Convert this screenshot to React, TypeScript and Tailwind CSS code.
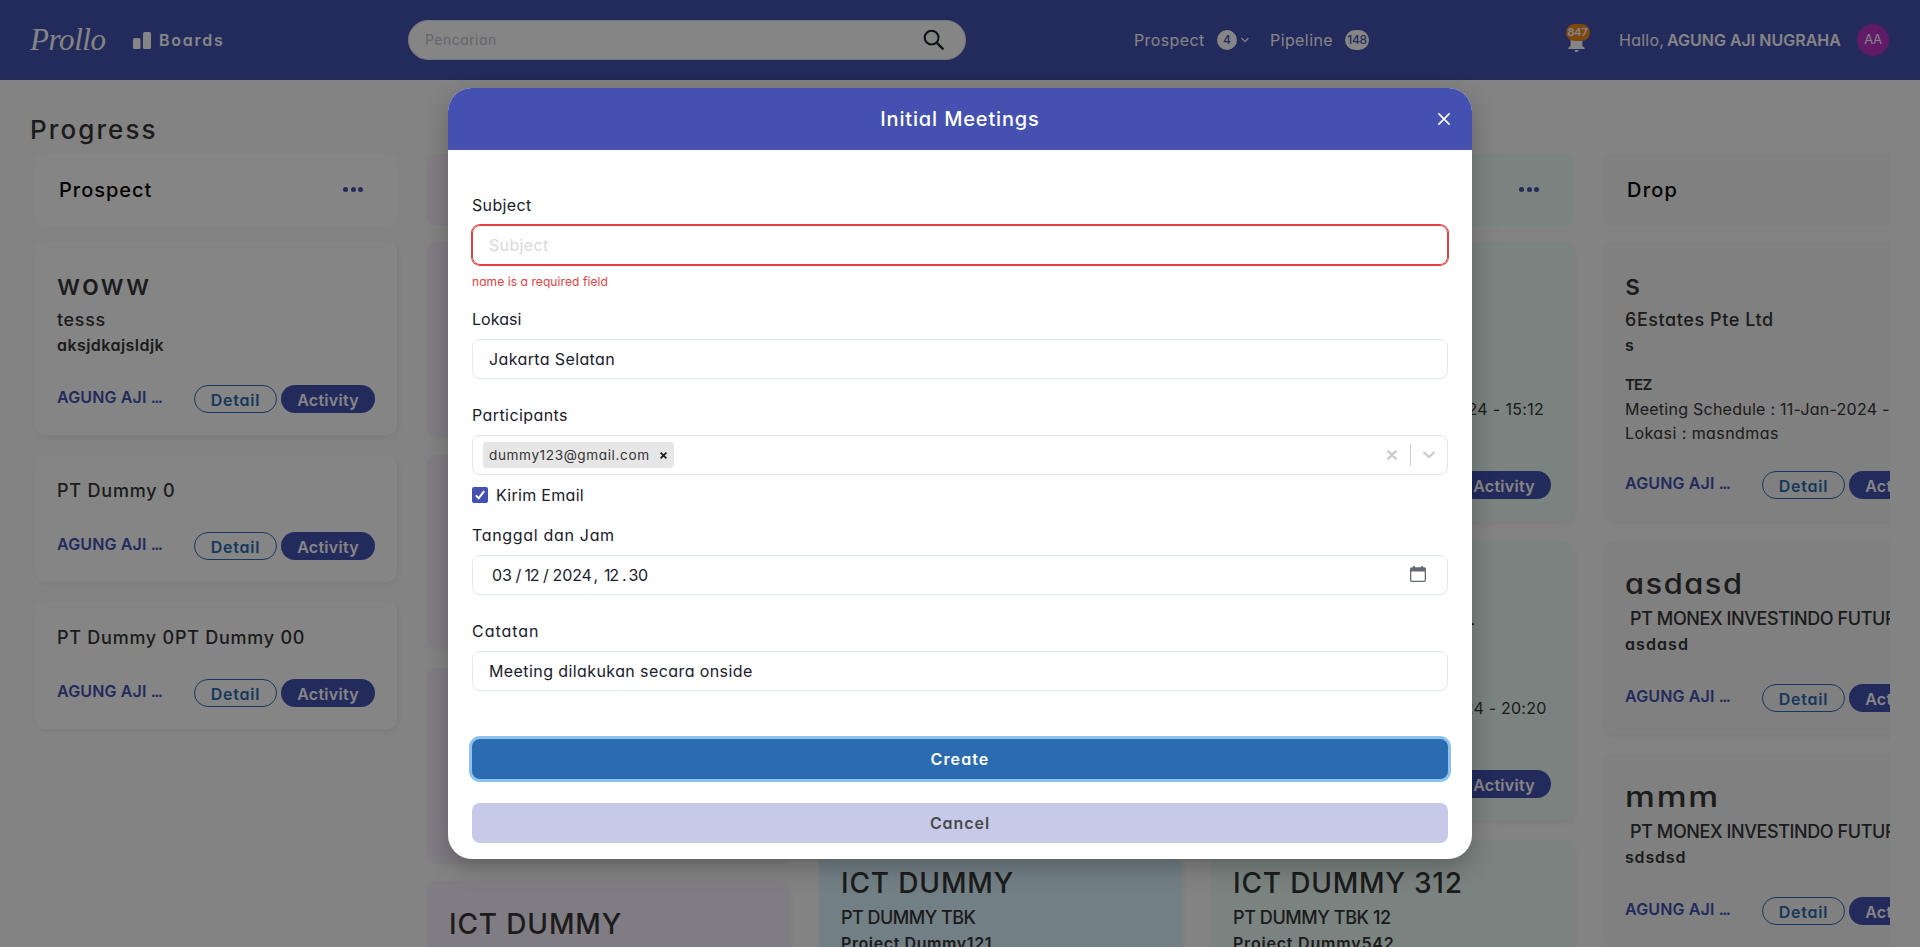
import type { ReactNode } from "react";

type Line = [text: string, tracking: string];

interface CardData {
  blank?: string;
  title?: Line;
  company?: Line;
  project?: Line;
  meeting?: { name: Line; schedule: Line; place: Line };
}

interface ColumnData {
  id: string;
  name: Line;
  headTone: string;
  cardTone: string;
  cards: CardData[];
}

const none: Line = ["", ""];

const columns: ColumnData[] = [
  {
    id: "prospect",
    name: ["Prospect", "tracking-[0.97px]"],
    headTone: "bg-white",
    cardTone: "bg-white",
    cards: [
      {
        title: ["woww", "tracking-[2.2px]"],
        company: ["tesss", "tracking-[0.65px]"],
        project: ["aksjdkajsldjk", "tracking-[0.45px]"],
      },
      { company: ["PT Dummy 0", "tracking-[0.8px]"] },
      { company: ["PT Dummy 0PT Dummy 00", "tracking-[0.75px]"] },
    ],
  },
  {
    id: "meeting",
    name: none,
    headTone: "bg-[#f8f0fc]",
    cardTone: "bg-[#f6eefc]",
    cards: [{ blank: "h-[193px]" }, { blank: "h-[193px]" }, { blank: "h-[193px]" }, { title: ["ICT DUMMY", "tracking-[0.85px]"] }],
  },
  {
    id: "proposal",
    name: none,
    headTone: "bg-[#dcf3ff]",
    cardTone: "bg-[#daf3ff]",
    cards: [
      { blank: "h-[279px]" },
      { blank: "h-[279px]" },
      {
        title: ["ICT DUMMY", "tracking-[0.85px]"],
        company: ["PT DUMMY TBK", "tracking-[-0.52px]"],
        project: ["Project Dummy121", "tracking-[0.6px]"],
      },
    ],
  },
  {
    id: "closing",
    name: none,
    headTone: "bg-[#e8fdf5]",
    cardTone: "bg-[#eafcf5]",
    cards: [
      {
        title: none,
        company: none,
        project: none,
        meeting: { name: none, schedule: ["Meeting Schedule : 11-Jan-2024 - 15:12", "tracking-[0.34px]"], place: none },
      },
      {
        title: none,
        company: ["PT MONEX INVESTINDO TBL", "tracking-[-0.36px]"],
        project: none,
        meeting: { name: none, schedule: ["Meeting Schedule : 11-Jan-2024 - 20:20", "tracking-[0.21px]"], place: none },
      },
      {
        title: ["ICT DUMMY 312", "tracking-[0.81px]"],
        company: ["PT DUMMY TBK 12", "tracking-[-0.42px]"],
        project: ["Project Dummy542", "tracking-[0.8px]"],
      },
    ],
  },
  {
    id: "drop",
    name: ["Drop", "tracking-[1.2px]"],
    headTone: "bg-[#f5f5f5]",
    cardTone: "bg-[#f5f5f5]",
    cards: [
      {
        title: ["s", ""],
        company: ["6Estates Pte Ltd", "tracking-[0.56px]"],
        project: ["s", ""],
        meeting: { name: ["TEZ", "tracking-[-0.8px]"], schedule: ["Meeting Schedule : 11-Jan-2024 - 10:00", "tracking-[0.25px]"], place: ["Lokasi : masndmas", "tracking-[0.43px]"] },
      },
      {
        title: ["asdasd", "tracking-[1.4px] w-fit origin-left scale-x-110"],
        company: ["PT MONEX INVESTINDO FUTURES", "tracking-[-0.41px] pl-[5px]"],
        project: ["asdasd", "tracking-[1.09px]"],
      },
      {
        title: ["mmm", "tracking-[1.5px] w-fit origin-left scale-x-[1.2]"],
        company: ["PT MONEX INVESTINDO FUTURES", "tracking-[-0.41px] pl-[5px]"],
        project: ["sdsdsd", "tracking-[0.83px]"],
      },
    ],
  },
];

const cardBase = "shrink-0 overflow-hidden rounded-[10px] shadow-[2px_3px_5px_rgba(0,0,0,0.05)]";

function Card({ card, tone }: { card: CardData; tone: string }) {
  if (card.blank) return <article className={`${cardBase} ${card.blank} ${tone}`} />;
  return (
    <article className={`${cardBase} p-[22px] whitespace-nowrap text-[#363636] ${tone}`}>
      {card.title && <h3 className={`h-[42px] text-[28px] leading-[42px] font-medium ${card.title[1]}`}>{card.title[0]}</h3>}
      {card.company && <p className={`h-[27px] text-[18px] leading-[27px] font-medium ${card.company[1]}`}>{card.company[0]}</p>}
      {card.project && <p className={`h-6 text-base leading-6 font-semibold ${card.project[1]}`}>{card.project[0]}</p>}
      {card.meeting && (
        <div className="mt-4 -mb-0.5 leading-6">
          <p className={`h-6 text-[15px] leading-6 font-semibold ${card.meeting.name[1]}`}>{card.meeting.name[0]}</p>
          <p className={`h-6 ${card.meeting.schedule[1]}`}>{card.meeting.schedule[0]}</p>
          <p className={`h-6 ${card.meeting.place[1]}`}>{card.meeting.place[0]}</p>
        </div>
      )}
      <div className="mt-7 flex h-7 items-center">
        <span className="mb-1 w-[137px] font-semibold tracking-[0.14px] text-[#4451b1]">
          AGUNG AJI <span className="tracking-[-1.6px]">...</span>
        </span>
        <button className="flex h-7 w-[83px] items-center justify-center rounded-full border border-[#2b6cb0] pt-px font-semibold tracking-[0.8px] text-[#2b6cb0]">Detail</button>
        <button className="ml-1 flex h-7 w-[94px] items-center justify-center rounded-full bg-[#4451b1] pt-px font-semibold tracking-[0.27px] text-white">Activity</button>
      </div>
    </article>
  );
}

function Column({ column }: { column: ColumnData }) {
  return (
    <section className="flex w-[362px] shrink-0 flex-col">
      <header className={`flex h-[72px] shrink-0 items-center justify-between rounded-[10px] pr-[34px] pl-6 ${column.headTone}`}>
        <h2 className={`text-xl font-medium text-black ${column.name[1]}`}>{column.name[0]}</h2>
        <span className="mb-px flex gap-[2.5px]">
          <i className="size-[5px] rounded-full bg-[#4451b1]" />
          <i className="size-[5px] rounded-full bg-[#4451b1]" />
          <i className="size-[5px] rounded-full bg-[#4451b1]" />
        </span>
      </header>
      <div className="mt-4 flex flex-col gap-5">
        {column.cards.map((card, i) => (
          <Card key={i} card={card} tone={column.cardTone} />
        ))}
      </div>
    </section>
  );
}

function TopBar() {
  return (
    <nav className="flex h-20 shrink-0 items-center bg-[#4451b1] text-white">
      <span className="ml-[30px] w-[103px] font-['Liberation_Serif',serif] text-[31px] leading-10 font-normal tracking-[-0.4px] italic">Prollo</span>
      <svg className="mt-px h-[17px] w-[18px]" viewBox="0 0 18 17" fill="currentColor">
        <rect x="0" y="6" width="7.5" height="11" rx="1.5" />
        <rect x="10" y="0" width="8" height="17" rx="1.5" />
      </svg>
      <span className="ml-2 w-[249px] font-semibold tracking-[1.75px]">Boards</span>
      <div className="flex h-10 w-[558px] items-center justify-between rounded-full border border-[#e2e8f0] bg-white pr-5 pl-4">
        <span className="text-sm tracking-[0.46px] text-[#c0c5cd]">Pencarian</span>
        <svg className="size-[22px]" viewBox="0 0 22 22" fill="none" stroke="#1a202c" strokeWidth="2">
          <circle cx="8.6" cy="8.6" r="6.9" />
          <path d="M13.4 13.4 20.4 20.4" strokeWidth="2.3" />
        </svg>
      </div>
      <span className="ml-[168px] w-[83px] tracking-[0.4px]">Prospect</span>
      <span className="flex size-5 items-center justify-center rounded-full bg-white text-xs font-medium text-[#4451b1]">4</span>
      <svg className="ml-1 h-2 w-2" viewBox="0 0 8 8" fill="none" stroke="currentColor" strokeWidth="1.2">
        <path d="M.6 2 4 5.6 7.4 2" />
      </svg>
      <span className="ml-[21px] w-[75px] tracking-[0.41px]">Pipeline</span>
      <span className="flex h-5 w-6 items-center justify-center rounded-full bg-white text-xs font-medium tracking-[-0.3px] text-[#4451b1]">148</span>
      <span className="relative ml-[197px] flex h-8 w-5 items-end justify-center">
        <svg className="mb-1 h-[19px] w-[17px]" viewBox="0 0 17 19" fill="currentColor">
          <path d="M8.5 0C5 1 2.6 3.5 2.6 7v6L.4 14.700V16h16.200v-1.300L14.400 13V7c0-3.500-2.400-6-5.900-7ZM6.400 17h4.200a2.100 2.100 0 0 1-4.200 0Z" />
        </svg>
        <span className="absolute top-0 left-[-0.5px] flex h-[17px] w-6 items-center justify-center rounded-full bg-[#f28a22] text-[11px] font-semibold tracking-[-0.2px]">847</span>
      </span>
      <span className="ml-[33px] w-[48px] tracking-[0.25px]">Hallo,</span>
      <span className="w-[190px] font-semibold">AGUNG AJI NUGRAHA</span>
      <span className="flex size-8 items-center justify-center rounded-full bg-[#b832c8] text-[13px] tracking-[-0.4px]">AA</span>
    </nav>
  );
}

function Field({ label, tracking, children, className = "" }: { label: string; tracking: string; children: ReactNode; className?: string }) {
  return (
    <div className={className}>
      <label className={`block h-6 leading-6 ${tracking}`}>{label}</label>
      <div className="mt-2">{children}</div>
    </div>
  );
}

const box = "flex h-10 items-center rounded-lg border border-[#e2e8f0] px-4";

function MeetingModal() {
  return (
    <div role="dialog" className="flex h-[771px] w-[1024px] flex-col overflow-hidden rounded-[24px] bg-white text-[#1a202c] shadow-[0_8px_24px_rgba(0,0,0,0.25)]">
      <header className="grid h-[62px] shrink-0 grid-cols-[1fr_auto_1fr] items-center bg-[#4451b1] text-white">
        <span />
        <h1 className="text-xl font-medium tracking-[0.85px]">Initial Meetings</h1>
        <svg className="mr-[22px] size-3 justify-self-end" viewBox="0 0 12 12" fill="none" stroke="currentColor" strokeWidth="1.6" strokeLinecap="round">
          <path d="M.9.9 11.1 11.1M11.1.9.9 11.1" />
        </svg>
      </header>
      <form className="flex flex-col px-6 pt-[43px]">
        <Field label="Subject" tracking="tracking-[0.35px]">
          <div className="flex h-10 items-center rounded-lg border border-[#e53e3e] px-4 tracking-[0.35px] text-[#d9d9d9] shadow-[0_0_0_1px_#e53e3e]">Subject</div>
        </Field>
        <p className="mt-2 h-[18px] text-xs leading-[18px] tracking-[0.08px] text-[#e53e3e]">name is a required field</p>
        <Field label="Lokasi" tracking="tracking-[0.05px]" className="mt-4">
          <div className={box}>
            <span className="tracking-[0.38px]">Jakarta Selatan</span>
          </div>
        </Field>
        <Field label="Participants" tracking="tracking-[0.42px]" className="mt-6">
          <div className="flex h-10 items-center rounded-lg border border-[#e5e5e5] pr-3 pl-2.5">
            <span className="flex h-[26px] w-[191px] items-center rounded-sm bg-[#e6e6e6] pl-1.5 text-[13.6px] tracking-[0.6px] text-[#333333]">
              <span className="w-[171px]">dummy123@gmail.com</span>
              <svg className="size-[7px]" viewBox="0 0 7 7" fill="none" stroke="#1a202c" strokeWidth="1.8">
                <path d="M.6.6 6.4 6.4M6.4.6.6 6.4" />
              </svg>
            </span>
            <svg className="ml-auto size-2.5" viewBox="0 0 10 10" fill="none" stroke="#cccccc" strokeWidth="2.4" strokeLinecap="round">
              <path d="M1.3 1.3 8.7 8.7M8.7 1.3 1.3 8.7" />
            </svg>
            <i className="ml-[13px] h-[22px] w-px bg-[#cccccc]" />
            <svg className="ml-3 h-2 w-3" viewBox="0 0 12 8" fill="none" stroke="#cccccc" strokeWidth="2.2" strokeLinecap="round" strokeLinejoin="round">
              <path d="M1.3 1.6 6 6.2 10.7 1.6" />
            </svg>
          </div>
        </Field>
        <label className="mt-2 flex h-6 items-center gap-2 tracking-[0.3px]">
          <span className="flex size-4 items-center justify-center rounded-[2px] bg-[#4451b1]">
            <svg className="size-2.5" viewBox="0 0 10 10" fill="none" stroke="white" strokeWidth="1.9">
              <path d="M.8 5.3 3.7 8.2 9.2 1.2" />
            </svg>
          </span>
          Kirim Email
        </label>
        <Field label="Tanggal dan Jam" tracking="tracking-[0.68px]" className="mt-4">
          <div className="flex h-10 items-center rounded-lg border border-[#e2e8f0] pr-[21px] pl-[19px]">
            <span className="w-[23.5px] tracking-[-0.2px]">03</span>
            <span className="w-[9px]">/</span>
            <span className="w-[18.5px] tracking-[-1.2px]">12</span>
            <span className="w-[9.5px]">/</span>
            <span className="w-[41px] tracking-[-0.1px]">2024</span>
            <span className="w-[10.5px]">,</span>
            <span className="w-[18px] tracking-[-1.2px]">12</span>
            <span className="w-[6.5px]">.</span>
            <span className="tracking-[-0.4px]">30</span>
            <svg className="mb-0.5 ml-auto h-4 w-4" viewBox="0 0 16 16" fill="none" stroke="#646973" strokeWidth="1.3">
              <rect x=".65" y="2" width="14.7" height="13.3" rx="1.3" />
              <path d="M.6 3.7h14.8" strokeWidth="3.6" />
              <path d="M4 0v2.5M12 0v2.5" strokeWidth="1.8" />
            </svg>
          </div>
        </Field>
        <Field label="Catatan" tracking="tracking-[0.95px]" className="mt-6">
          <div className={box}>
            <span className="tracking-[0.41px]">Meeting dilakukan secara onside</span>
          </div>
        </Field>
        <button type="button" className="mt-12 h-10 rounded-lg bg-[#2b6cb0] font-semibold tracking-[1.1px] text-white shadow-[0_0_0_3px_#8ec2ee]">Create</button>
        <button type="button" className="mt-6 h-10 rounded-lg bg-[#c7c9e8] font-semibold tracking-[0.95px] text-[#4a4a4a]">Cancel</button>
      </form>
    </div>
  );
}

export default function App() {
  return (
    <div className="relative h-[947px] w-full overflow-hidden bg-[#fbfbfb] font-['Inter','Liberation_Sans',sans-serif] text-base [font-feature-settings:'cv11']">
      <div className="flex h-full flex-col">
        <TopBar />
        <main className="flex min-h-0 flex-1 flex-col overflow-hidden pt-[30px]">
          <h1 className="ml-[30px] h-10 shrink-0 text-[26px] leading-10 font-medium tracking-[2.1px] text-[#363636]">Progress</h1>
          <div className="mr-[30px] flex min-h-0 flex-1 gap-[30px] overflow-hidden pt-1 pl-[35px]">
            {columns.map((column) => (
              <Column key={column.id} column={column} />
            ))}
          </div>
        </main>
      </div>
      <div className="absolute inset-0 flex items-start justify-center bg-black/48 pt-[88px]">
        <MeetingModal />
      </div>
    </div>
  );
}
